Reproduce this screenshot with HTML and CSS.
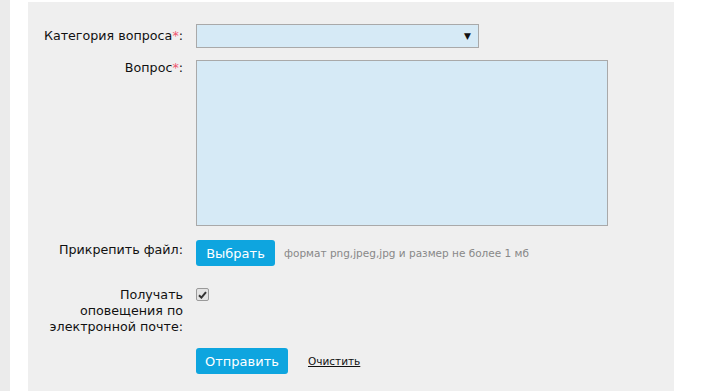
FILE: index.html
```html
<!DOCTYPE html>
<html lang="ru">
<head>
    <meta charset="UTF-8">
    <meta name="viewport" content="width=device-width, initial-scale=1.0">
    <title>Задать вопрос</title>
    <link rel="stylesheet" href="styles.css">
</head>
<body>
    <div class="page">
        <div class="side"></div>
        <form class="panel">
            <div class="row row-select">
                <label class="caption">Категория вопроса<span class="req">*</span>:</label>
                <div class="select">
                    <span class="arrow">&#9660;</span>
                </div>
            </div>

            <div class="row row-text">
                <label class="caption">Вопрос<span class="req">*</span>:</label>
                <div class="textarea"></div>
            </div>

            <div class="row row-file">
                <label class="caption">Прикрепить файл:</label>
                <div class="field">
                    <button type="button" class="btn btn-pick">Выбрать</button>
                    <span class="hint">формат png,jpeg,jpg и размер не более 1 мб</span>
                </div>
            </div>

            <div class="row row-check">
                <label class="caption"><span class="wrap">Получать оповещения по электронной почте:</span></label>
                <div class="field">
                    <span class="check">
                        <svg width="9" height="8" viewBox="0 0 9 8"><path d="M1 4.2 L3.4 6.6 L8 1.2" fill="none" stroke="#333" stroke-width="2"/></svg>
                    </span>
                </div>
            </div>

            <div class="row row-submit">
                <span class="caption"></span>
                <div class="field">
                    <button type="button" class="btn btn-send">Отправить</button>
                    <a href="#" class="clear">Очистить</a>
                </div>
            </div>
        </form>
    </div>
</body>
</html>
```

FILE: styles.css
```css
body {
    margin: 0;
    background: #fff;
    font-family: "DejaVu Sans", Verdana, sans-serif;
    font-size: 12.7px;
    color: #111;
}
.page {
    display: flex;
    height: 391px;
}
.side {
    width: 10px;
    background: #ebebeb;
    margin-right: 18px;
}
.panel {
    width: 646px;
    margin-top: 2px;
    background: #efefef;
    padding-top: 22px;
    box-sizing: border-box;
}
.row {
    display: flex;
    align-items: flex-start;
}
.caption {
    width: 155px;
    flex: none;
    margin-right: 13px;
    text-align: right;
    line-height: 16px;
}
.wrap {
    display: inline-block;
    max-width: 142px;
}
.req {
    color: #f0566e;
}
.select {
    width: 283px;
    height: 24px;
    box-sizing: border-box;
    border: 1px solid #a9a9a9;
    background: #d6eaf6;
    display: flex;
    justify-content: flex-end;
    align-items: center;
    padding-right: 7px;
}
.arrow {
    font-size: 9px;
}
.row-select .caption {
    padding-top: 4px;
}
.row-text {
    margin-top: 12px;
}
.textarea {
    width: 412px;
    height: 166px;
    box-sizing: border-box;
    border: 1px solid #a9a9a9;
    background: #d6eaf6;
}
.row-file {
    margin-top: 14px;
}
.row-file .caption {
    padding-top: 2px;
}
.field {
    display: flex;
    align-items: center;
}
.btn {
    font-family: inherit;
    font-size: 13px;
    color: #fff;
    background: #0ea5df;
    border: none;
    border-radius: 3px;
    height: 26px;
    padding: 0 8px;
    cursor: pointer;
}
.btn-pick {
    width: 79px;
}
.hint {
    margin-left: 9px;
    color: #888;
    font-size: 10.5px;
}
.row-check {
    margin-top: 22px;
}
.row-check .caption {
    margin-top: -1px;
}
.check {
    width: 11px;
    height: 11px;
    border: 1px solid #9a9a9a;
    border-radius: 2px;
    background: #e4e4e4;
    display: flex;
    align-items: center;
    justify-content: center;
}
.row-submit {
    margin-top: 13px;
}
.btn-send {
    width: 92px;
}
.clear {
    margin-left: 20px;
    color: #111;
    font-size: 10.5px;
}
```
